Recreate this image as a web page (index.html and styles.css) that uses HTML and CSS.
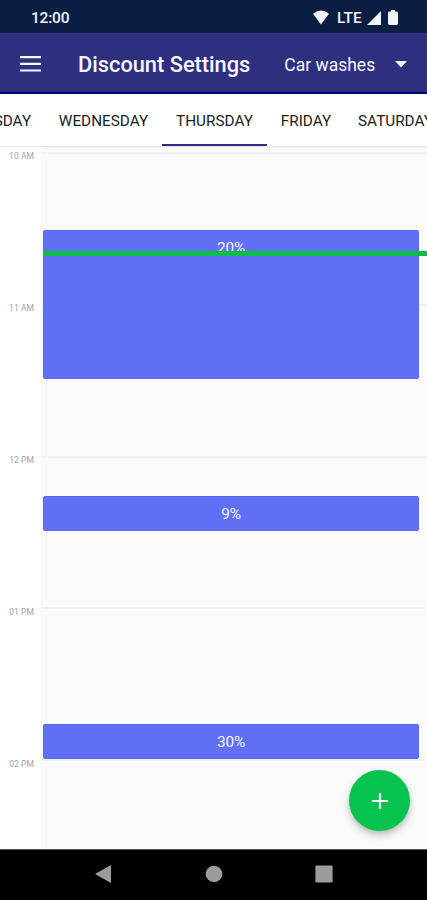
FILE: index.html
```html
<!DOCTYPE html>
<html lang="en">
<head>
<meta charset="utf-8">
<meta name="viewport" content="width=device-width, initial-scale=1">
<title>Discount Settings</title>
<link rel="stylesheet" href="styles.css">
</head>
<body>
<div class="status">
  <span class="clock">12:00</span>
  <svg class="wifi" viewBox="0 0 17 15"><path d="M0 3.6Q8.5-3.4 17 3.6L8.5 15Z"/></svg>
  <span class="lte">LTE</span>
  <svg class="signal" viewBox="0 0 14 14"><path d="M14 0V14H0Z"/></svg>
  <svg class="battery" viewBox="0 0 10 15"><path d="M3 0h4v1.6h1.6Q10 1.6 10 3v10.6Q10 15 8.6 15H1.4Q0 15 0 13.6V3Q0 1.6 1.4 1.6H3Z"/></svg>
</div>
<header class="appbar">
  <svg class="menu" viewBox="0 0 21 16"><path d="M0 0h21v2.2H0zM0 6.7h21v2.2H0zM0 13.4h21v2.2H0z"/></svg>
  <h1 class="title">Discount Settings</h1>
  <span class="picker">Car washes</span>
  <svg class="caret" viewBox="0 0 12 7"><path d="M0 0h12L6 6.5Z"/></svg>
</header>
<nav class="tabs">
  <span class="tab tab-tue">TUESDAY</span>
  <span class="tab tab-wed">WEDNESDAY</span>
  <span class="tab tab-thu active">THURSDAY</span>
  <span class="tab tab-fri">FRIDAY</span>
  <span class="tab tab-sat">SATURDAY</span>
</nav>
<main class="calendar">
  <div class="gutter">
    <span class="hour">10 AM</span>
    <span class="hour">11 AM</span>
    <span class="hour">12 PM</span>
    <span class="hour">01 PM</span>
    <span class="hour">02 PM</span>
  </div>
  <div class="day">
    <div class="lines">
      <i class="slot"></i><i class="slot"></i><i class="slot"></i><i class="slot"></i><i class="slot"></i>
    </div>
    <div class="events">
      <div class="event event-long">20%</div>
      <div class="event event-noon">9%</div>
      <div class="event event-late">30%</div>
    </div>
    <div class="now"></div>
  </div>
  <button class="fab" aria-label="Add"><svg viewBox="0 0 16 16"><path d="M6.9 0h2.2v6.9H16v2.2H9.1V16H6.9V9.1H0V6.9h6.9z"/></svg></button>
</main>
<footer class="navbar">
  <svg viewBox="0 0 18 18"><path d="M16 .4V17.6Q16 18 15.5 17.8L.8 9.5Q.2 9 .8 8.5L15.5.2Q16 0 16 .4Z"/></svg>
  <svg viewBox="0 0 18 18"><circle cx="9" cy="9" r="8.3"/></svg>
  <svg viewBox="0 0 18 18"><rect x=".4" y=".4" width="17.2" height="17.2" rx="1"/></svg>
</footer>
</body>
</html>
```
FILE: styles.css
```css
* { box-sizing: border-box; }
body {
  margin: 0;
  width: 427px;
  height: 900px;
  overflow: hidden;
  display: flex;
  flex-direction: column;
  font-family: Roboto, "Liberation Sans", sans-serif;
  background: #fff;
}
svg { display: block; flex: none; fill: currentColor; }

.status {
  flex: none;
  height: 33px;
  display: flex;
  align-items: center;
  padding: 2px 29px 0 31px;
  background: #0a1d42;
  color: #f3f4f8;
}
.clock { font-size: 15.5px; font-weight: 500; letter-spacing: -.2px; margin-right: auto; }
.wifi { width: 16px; height: 15px; }
.lte { font-size: 15.5px; font-weight: 500; margin: 0 5px 0 8px; width: 25px; }
.signal { width: 14px; height: 14px; margin-right: 7px; }
.battery { width: 10px; height: 15px; }

.appbar {
  flex: none;
  height: 61px;
  display: flex;
  align-items: center;
  padding: 3px 20px 0;
  background: #2f2f80;
  border-bottom: 2px solid #08086c;
  color: #f7f7ff;
}
.menu { width: 21px; height: 16px; }
.title { margin: 0 0 0 37px; width: 207px; padding-top: 1px; font-size: 21.8px; font-weight: 500; white-space: nowrap; }
.picker { width: 111px; padding-top: 1px; font-size: 17.5px; white-space: nowrap; }
.caret { width: 12px; height: 7px; }

.tabs {
  flex: none;
  height: 53px;
  display: flex;
  justify-content: flex-end;
  overflow: hidden;
  background: #fff;
  border-bottom: 1px solid #e6e6e6;
  color: #1c1c1c;
}
.tab {
  flex: none;
  height: 52px;
  display: flex;
  align-items: center;
  justify-content: center;
  font-size: 15.3px;
  padding-top: 3px;
  border-bottom: 2px solid transparent;
}
.tab-tue { width: 97px; padding-left: 4px; }
.tab-wed { width: 117px; }
.tab-thu { width: 105px; }
.tab-fri { width: 78px; }
.tab-sat { width: 101px; margin-right: -19px; }
.active { border-bottom-color: #2f2f80; }

.calendar { flex: none; height: 702px; display: flex; position: relative; overflow: hidden; }
.gutter { width: 42px; padding-top: 3px; background: #fff; border-right: 1px solid #f7f7f7; }
.hour {
  display: block;
  height: 152px;
  padding-right: 7px;
  text-align: right;
  font-size: 8.6px;
  line-height: 12px;
  color: #a3a3a3;
}
.day { flex: 1; display: grid; position: relative; background: #fafafa; border-top: 1px solid #f3f3f3; }
.lines, .events { grid-area: 1 / 1; }
.lines { padding-top: 4px; }
.slot { display: block; height: 151.8px; border-top: 2px solid #f0f0f0; }
.events { padding: 82px 8px 0 1px; }
.event {
  display: flex;
  justify-content: center;
  background: #606ff3;
  border: 1px solid #5969ed;
  border-radius: 2px;
  color: #f6f7ff;
  font-size: 15.4px;
  line-height: 18px;
  padding-top: 8px;
  letter-spacing: -.2px;
}
.event-long { height: 149px; }
.event-noon { height: 35px; margin-top: 117px; }
.event-late { height: 35px; margin-top: 193px; }
.now { position: absolute; left: 1px; right: 0; top: 103px; height: 5px; background: #0cbd48; }
.fab {
  position: absolute;
  left: 349px;
  top: 623px;
  width: 61px;
  height: 61px;
  display: flex;
  align-items: center;
  justify-content: center;
  padding: 0;
  border: 0;
  border-radius: 50%;
  background: #05c34d;
  color: #fff;
  box-shadow: 0 4px 7px rgba(0, 0, 0, .25);
}
.fab svg { width: 16px; height: 16px; }

.navbar {
  flex: none;
  height: 51px;
  display: flex;
  justify-content: space-between;
  align-items: center;
  padding: 0 94px 2px 95px;
  background: #000;
  border-top: 1px solid #555;
  color: #9c9c9c;
}
.navbar svg { width: 18px; height: 18px; }
```
